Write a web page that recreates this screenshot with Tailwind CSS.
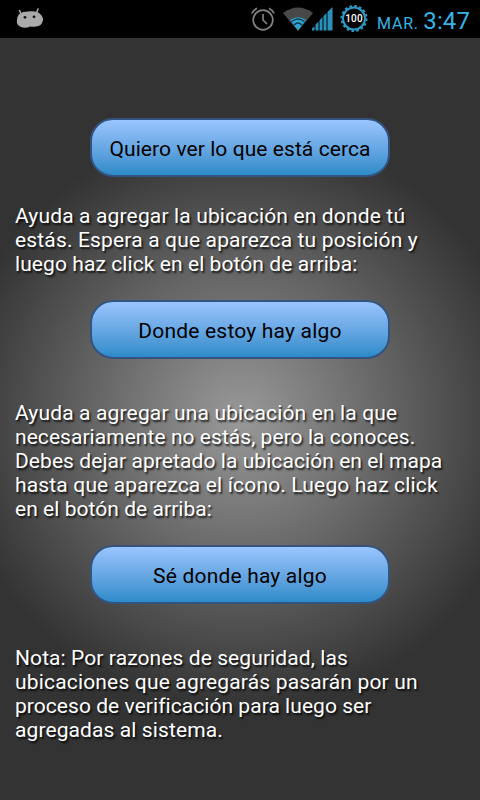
<!DOCTYPE html>
<html lang="es">
<head>
<meta charset="utf-8">
<title>Agregar ubicación</title>
<script src="https://cdn.jsdelivr.net/npm/@tailwindcss/browser@4"></script>
</head>
<body class="w-[480px] h-[800px] overflow-hidden bg-black font-['Roboto',sans-serif] flex flex-col">
<header class="h-[38px] shrink-0 bg-black flex items-center pl-4 pr-[10px] text-[#33b5e5]">
  <svg class="w-7 h-[22px]" viewBox="0 0 28 22">
    <path d="M3.500 2.500l2 4M22 1l-1.500 4" stroke="#aaa" stroke-width="1.600" stroke-linecap="round"/>
    <path d="M4 5.500Q7 3.500 12 3.500Q18 2.500 22 4.500Q27 7 27 12Q26 18 20 18.500Q17 19 14 18.500Q9 21 4 18.500Q0 16 1 12Q1 8 4 5.500Z" fill="#aaa"/>
    <circle cx="9" cy="9.300" r="1.400" fill="#111"/><circle cx="18" cy="8.800" r="1.400" fill="#111"/>
  </svg>
  <svg class="w-6 h-6 ml-auto mr-[8px]" viewBox="0 0 24 24" fill="none" stroke="#828282" stroke-width="1.700">
    <circle cx="12" cy="13" r="9.800"/><path d="M12 7v6l4 4M.8 6.500Q2.500 3 6 1.200M18 1.200Q21.500 3 23.200 6.500"/>
  </svg>
  <svg class="w-[30px] h-6" viewBox="0 0 30 24">
    <path d="M0 6Q15-5 30 6L15 24Z" fill="#484848"/>
    <path d="M7 13Q15 7.500 23 13L15 23.500Z" fill="#2fa4d2"/>
    <path d="M8.500 14.500Q15 9.500 21.500 14.500M11 18Q15 14 19 18" stroke="#10394b" stroke-width="1.300" fill="none"/>
  </svg>
  <svg class="w-[22px] h-6 -ml-px mr-[6px]" viewBox="0 0 22 24" fill="#2b91bb">
    <path d="M0 23.500v-2l2.500-2.500v4.500zM3.500 23.500v-6l3-3v9zM7.500 23.500v-10l3-3.500v13.500zM11.500 23.500v-14.500l3-3v17.500zM15.500 23.500v-18.500l5-5v23.500z"/>
  </svg>
  <svg class="w-7 h-7 mr-[9px]" viewBox="0 0 28 28">
    <circle cx="14" cy="13.500" r="11" fill="#000" stroke="#2b9cc8" stroke-width="2"/>
    <circle cx="14" cy="13.500" r="12.500" fill="none" stroke="#2b9cc8" stroke-width="2" stroke-dasharray="2.500 2.400"/>
    <text x="14" y="17" text-anchor="middle" font-family="Roboto" font-size="10" font-weight="500" fill="#fff" letter-spacing=".2">100</text>
  </svg>
  <div class="w-[93px] flex items-baseline justify-between whitespace-nowrap pt-[3px]">
    <span class="text-[16px] tracking-[0.8px]">MAR.</span>
    <span class="text-[24px] leading-8 tracking-[0.1px]">3:47</span>
  </div>
</header>
<main class="flex-1 flex flex-col items-center text-[21px] leading-6 pt-20 bg-[radial-gradient(circle_290px_at_50%_50%,#999,#333)]">
  <button class="w-[300px] h-[59px] shrink-0 rounded-[23px] border-2 border-[#34547f] bg-linear-to-b from-[#9ac5ff] to-[#2c8bc9] text-black whitespace-nowrap pt-[3px] tracking-[0.07px]">Quiero ver lo que está cerca</button>
  <p class="w-[450px] mt-[27px] text-white whitespace-nowrap [text-shadow:1.5px_1.5px_2px_#000c]"><span class="tracking-[0.15px]">Ayuda a agregar la ubicación en donde tú</span><br><span class="tracking-[0.16px]">estás. Espera a que aparezca tu posición y</span><br><span class="tracking-[0.08px]">luego haz click en el botón de arriba:</span></p>
  <button class="w-[300px] h-[59px] shrink-0 mt-6 rounded-[23px] border-2 border-[#34547f] bg-linear-to-b from-[#9ac5ff] to-[#2c8bc9] text-black whitespace-nowrap pt-[3px] tracking-[0.2px]">Donde estoy hay algo</button>
  <p class="w-[450px] mt-[42px] text-white whitespace-nowrap [text-shadow:1.5px_1.5px_2px_#000c]"><span class="tracking-[0.15px]">Ayuda a agregar una ubicación en la que</span><br><span class="tracking-[0.05px]">necesariamente no estás, pero la conoces.</span><br><span class="tracking-[0.07px]">Debes dejar apretado la ubicación en el mapa</span><br><span class="tracking-[0.16px]">hasta que aparezca el ícono. Luego haz click</span><br><span class="tracking-[0.05px]">en el botón de arriba:</span></p>
  <button class="w-[300px] h-[59px] shrink-0 mt-6 rounded-[23px] border-2 border-[#34547f] bg-linear-to-b from-[#9ac5ff] to-[#2c8bc9] text-black whitespace-nowrap pt-[3px] tracking-[0.18px]">Sé donde hay algo</button>
  <p class="w-[450px] mt-[42px] text-white whitespace-nowrap [text-shadow:1.5px_1.5px_2px_#000c]"><span class="tracking-[0.09px]">Nota: Por razones de seguridad, las</span><br><span class="tracking-[0.17px]">ubicaciones que agregarás pasarán por un</span><br><span class="tracking-[0.05px]">proceso de verificación para luego ser</span><br><span class="tracking-[0.1px]">agregadas al sistema.</span></p>
</main>
</body>
</html>
